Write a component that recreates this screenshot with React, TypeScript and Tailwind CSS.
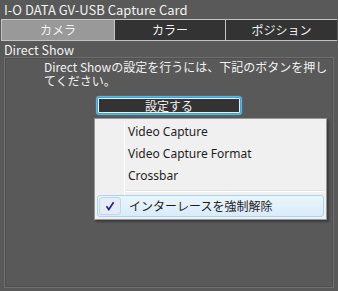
import React from "react";

const jp = { fontFamily: '"Noto Sans CJK JP", "DejaVu Sans", sans-serif' };
const ui = { fontFamily: '"Noto Sans", "Noto Sans CJK JP", sans-serif' };

export default function App() {
  return (
    <div className="relative w-[338px] h-[291px] bg-[#595959] text-[12px] text-[#f2f2f2] overflow-hidden" style={jp}>
      <div className="h-[19px] pl-[4px] leading-[19px] text-[13px]">I-O DATA GV-USB Capture Card</div>
      <div className="mx-[1px] grid grid-cols-[112px_111px_112px] h-[22px] border border-[#c4c4c4]">
        <div className="bg-[#999999] flex items-center justify-center leading-none">カメラ</div>
        <div className="bg-[#333333] border-l border-[#c4c4c4] flex items-center justify-center leading-none">カラー</div>
        <div className="bg-[#333333] border-l border-[#c4c4c4] flex items-center justify-center leading-none">ポジション</div>
      </div>
      <div className="h-[16px] pl-[4px] leading-[17px] text-[12.5px]">Direct Show</div>
      <div className="mx-[4px] h-[231px] border border-[#6e6e6e] shadow-[inset_0_0_0_1px_#505050]">
        <div className="pl-[39px] pt-[2px] leading-[14px]">
          <div>Direct Showの設定を行うには、下記のボタンを押し</div>
          <div>てください。</div>
        </div>
        <div className="ml-[92px] mt-[9px] w-[144px] h-[17px] rounded-[2px] border border-[#2fa6e6] shadow-[0_0_1px_1px_#5cc0f0] bg-[#f0f0f0] p-[1px]">
          <div className="h-full bg-[#333333] flex items-center justify-center leading-none">設定する</div>
        </div>
      </div>

      <div
        className="absolute left-[94px] top-[118px] w-[233px] h-[102px] bg-[#f0f0f0] border border-[#979797] shadow-[2px_2px_2px_rgba(0,0,0,0.35)] text-[12px] text-[#1e1e1e]"
        style={ui}
      >
        <div className="absolute left-[29px] top-[2px] bottom-[2px] w-[1px] bg-[#e2e3e3] border-r border-white" />
        <div className="relative pt-[2px]">
          <div className="h-[22px] pl-[33px] flex items-center">Video Capture</div>
          <div className="h-[22px] pl-[33px] flex items-center">Video Capture Format</div>
          <div className="h-[22px] pl-[33px] flex items-center">Crossbar</div>
          <div className="h-[8px] flex items-center pl-[31px] pr-[2px]">
            <div className="h-[2px] w-full border-t border-[#e0e0e0] border-b border-b-white" />
          </div>
          <div className="mx-[2px] h-[22px] rounded-[3px] border border-[#a8d8f0] bg-gradient-to-b from-[#eaf5fc] to-[#d9ecf8] flex items-center" style={jp}>
            <div className="ml-[1px] w-[22px] h-[18px] rounded-[3px] border border-[#c8d3ea] bg-[#e4ecf6] flex items-center justify-center">
              <svg width="10" height="10" viewBox="0 0 10 10">
                <path d="M1.5 5.2 L3.8 8.5 L8.6 1.2" fill="none" stroke="#1d1f8a" strokeWidth="1.6" />
              </svg>
            </div>
            <div className="ml-[8px] leading-none">インターレースを強制解除</div>
          </div>
        </div>
      </div>
    </div>
  );
}
